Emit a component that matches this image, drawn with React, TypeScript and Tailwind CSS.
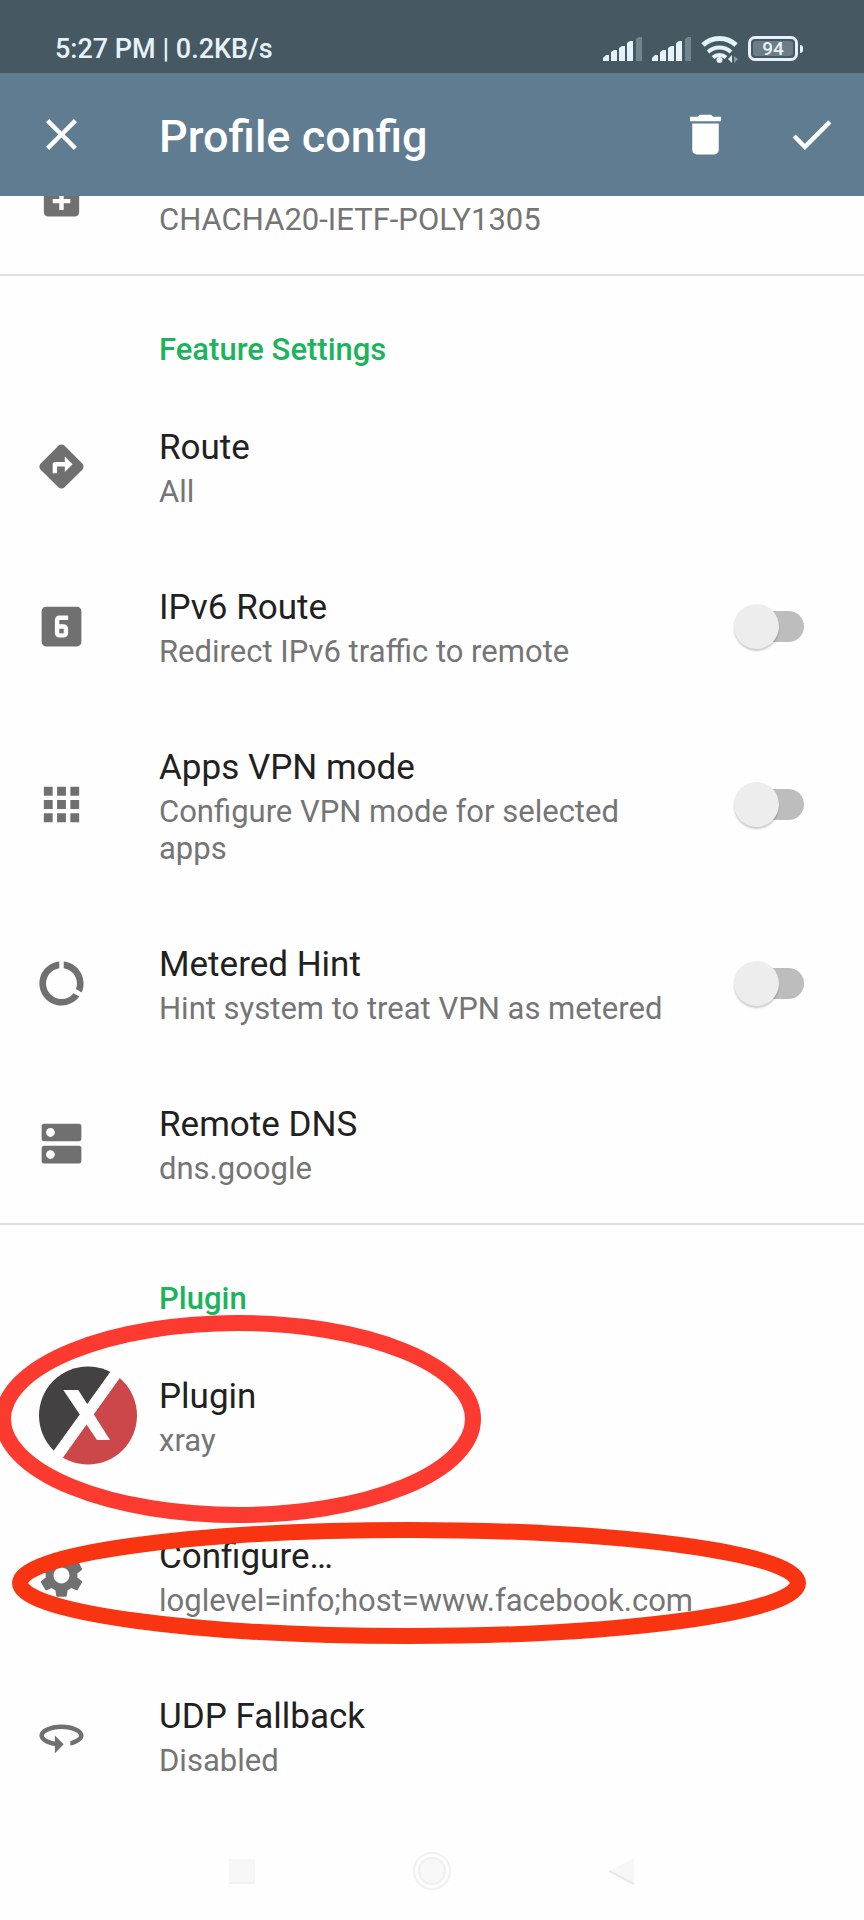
import { useState, type ReactNode } from "react";
import {
  MdApps,
  MdCheck,
  MdClose,
  MdDataUsage,
  MdDelete,
  MdDirections,
  MdDns,
  MdEnhancedEncryption,
  MdLooks6,
  MdSettings,
} from "react-icons/md";

function SignalIcon() {
  return (
    <svg viewBox="0 0 40 26" className="w-[40px] h-[26px]" fill="#e6f2fa" aria-hidden="true">
      <path d="M0 25v-3l3-3h3v6z" />
      <path d="M8 25V16l3-2h3v11z" />
      <path d="M16 25V12l3-2h3v15z" />
      <path d="M24 25V7l3-2h3v20z" />
      <path d="M33 25V3l3-2h3v24z" fill="#73848f" />
    </svg>
  );
}

function WifiIcon() {
  return (
    <svg viewBox="0 0 38 30" className="w-[38px] h-[30px]" fill="none" stroke="#e6f2fa" strokeWidth="5" aria-hidden="true">
      <path d="M2 11a24 24 0 0 1 33 0" />
      <path d="M7 18a17 17 0 0 1 23 0" strokeWidth="4" />
      <path d="M12 23.500a9.500 9.500 0 0 1 13 0" strokeWidth="4" />
      <circle cx="18.500" cy="26" r="3" fill="#e6f2fa" stroke="none" />
      <path d="M31 21v8l-4-4z" fill="#e6f2fa" stroke="none" />
      <path d="M33 22v7l4-4z" fill="#8b9ba5" stroke="none" />
    </svg>
  );
}

function Battery({ level }: { level: number }) {
  return (
    <div className="flex items-center gap-[2px]">
      <div className="w-[50px] h-[25px] rounded-[7px] border-[3px] border-[#e6f2fa] p-[2px]">
        <div className="h-full rounded-[3px] bg-[#6d7d87] flex items-center justify-center text-[19px] leading-[15px] font-medium text-[#e6f2fa]">
          {level}
        </div>
      </div>
      <div className="w-[3px] h-[8px] rounded-r-[3px] bg-[#e6f2fa]" />
    </div>
  );
}

function XrayLogo() {
  return (
    <svg viewBox="0 0 106 106" className="w-[106px] h-[106px] shrink-0" aria-hidden="true">
      <clipPath id="xray-disc">
        <circle cx="53" cy="53.500" r="49" />
      </clipPath>
      <g clipPath="url(#xray-disc)">
        <path d="M0 0H82.500L12 98H0z" fill="#444142" />
        <path d="M106 0V106H20L91 7z" fill="#cc474a" />
        <path d="M82.700 0H96L20.500 106H7z" fill="#fefefe" />
        <path d="M28.300 28h15L75 78H62z" fill="#fefefe" />
      </g>
    </svg>
  );
}

function ThreeSixtyIcon() {
  return (
    <svg viewBox="0 0 24 24" className="w-[53px] h-[53px]" fill="currentColor" aria-hidden="true">
      <path d="M12 7C6.480 7 2 9.240 2 12c0 2.240 2.940 4.130 7 4.770V20l4-4-4-4v2.730c-3.150-.56-5-1.900-5-2.730 0-1.060 3.040-3 8-3s8 1.940 8 3c0 .73-1.460 1.890-4 2.530v2.050c3.530-.77 6-2.530 6-4.580 0-2.760-4.480-5-10-5z" />
    </svg>
  );
}

type RowProps = { icon: ReactNode; title?: string; summary: string };

function RowBody({ icon, title, summary }: RowProps) {
  return (
    <>
      <span className="w-[124px] shrink-0 flex items-center text-[53px] text-[#707070]">{icon}</span>
      <span className="flex-1 min-w-0 pt-[41px] pb-[36px]">
        <span className="block h-[41px] text-[35px] leading-[41px] text-[#212121]">{title}</span>
        <span className="block mt-[5px] text-[31px] leading-[37px] text-[#757575]">{summary}</span>
      </span>
    </>
  );
}

function Row(props: RowProps) {
  return (
    <button type="button" className="flex w-full pl-[35px] text-left">
      <RowBody {...props} />
    </button>
  );
}

function SwitchRow(props: RowProps) {
  const [on, setOn] = useState(false);

  return (
    <label className="flex w-full pl-[35px]">
      <RowBody {...props} />
      <span className="w-[184px] shrink-0 pr-[60px] flex items-center justify-end">
        <input
          type="checkbox"
          role="switch"
          checked={on}
          onChange={(e) => setOn(e.target.checked)}
          className="appearance-none relative w-[62px] h-[31px] rounded-full bg-[#bdbdbd] checked:bg-[#8bdcab] before:absolute before:-left-[8px] before:-top-[7px] before:w-[45px] before:h-[45px] before:rounded-full before:bg-[#ededed] before:shadow-[0_2px_2px_rgba(0,0,0,0.2)] checked:before:left-[26px]"
        />
      </span>
    </label>
  );
}

function Category({ children }: { children: ReactNode }) {
  return (
    <h2 className="pl-[159px] pt-[51px] pb-[13px] text-[31px] leading-[46px] font-medium text-[#1bb45c]">
      {children}
    </h2>
  );
}

export default function App() {
  return (
    <div className="min-h-dvh flex flex-col overflow-x-hidden bg-[#fefefe] font-[Roboto,sans-serif]">
      <header className="relative z-10 text-white">
        <div className="h-[73px] bg-[#465963] pl-[55px] pr-[61px] pt-[24px] flex items-center justify-between">
          <span className="text-[27px] leading-[32px] font-medium text-[#e6f2fa]">5:27 PM | 0.2KB/s</span>
          <div className="flex items-center gap-[9px]">
            <SignalIcon />
            <SignalIcon />
            <WifiIcon />
            <Battery level={94} />
          </div>
        </div>
        <div className="h-[123px] bg-[#5f7c91] pl-[35px] flex items-center">
          <button type="button" aria-label="Close" className="w-[124px] text-[53px]">
            <MdClose />
          </button>
          <h1 className="flex-1 pt-1 text-[45px] leading-[52px] font-medium">Profile config</h1>
          <button type="button" aria-label="Delete" className="w-[106px] flex justify-center text-[53px]">
            <MdDelete />
          </button>
          <button type="button" aria-label="Save" className="w-[106px] flex justify-center text-[53px]">
            <MdCheck />
          </button>
        </div>
      </header>

      {/* the first row is scrolled half under the app bar */}
      <main className="flex-1 -mt-[82px]">
        <section>
          <Row icon={<MdEnhancedEncryption />} summary="CHACHA20-IETF-POLY1305" />
        </section>

        <section className="border-t-2 border-[#dedede]">
          <Category>Feature Settings</Category>
          <Row icon={<MdDirections />} title="Route" summary="All" />
          <SwitchRow icon={<MdLooks6 />} title="IPv6 Route" summary="Redirect IPv6 traffic to remote" />
          <SwitchRow icon={<MdApps />} title="Apps VPN mode" summary="Configure VPN mode for selected apps" />
          <SwitchRow icon={<MdDataUsage />} title="Metered Hint" summary="Hint system to treat VPN as metered" />
          <Row icon={<MdDns />} title="Remote DNS" summary="dns.google" />
        </section>

        <section className="border-t-2 border-[#dedede]">
          <Category>Plugin</Category>
          <div className="relative">
            <Row icon={<XrayLogo />} title="Plugin" summary="xray" />
            <svg
              viewBox="0 0 488 210"
              className="absolute -left-[6px] -top-[21px] w-[488px] h-[210px] pointer-events-none"
              aria-hidden="true"
            >
              <ellipse cx="244" cy="105" rx="235" ry="96" fill="none" stroke="#fd3a30" strokeWidth="16" />
            </svg>
          </div>
          <div className="relative">
            <Row icon={<MdSettings />} title="Configure…" summary="loglevel=info;host=www.facebook.com" />
            <svg
              viewBox="0 0 796 124"
              className="absolute left-[11px] top-[26px] w-[796px] h-[124px] pointer-events-none"
              aria-hidden="true"
            >
              <ellipse cx="398" cy="62" rx="389" ry="53" fill="none" stroke="#f93410" strokeWidth="16" />
            </svg>
          </div>
          <Row icon={<ThreeSixtyIcon />} title="UDP Fallback" summary="Disabled" />
        </section>
      </main>

      <nav className="h-[98px] flex items-center justify-center gap-[150px]">
        <button type="button" aria-label="Recents" className="w-[40px] flex justify-center">
          <span className="w-[26px] h-[25px] bg-[#f7f7f7] border-b-2 border-[#f1f1f1]" />
        </button>
        <button type="button" aria-label="Home" className="w-[40px] flex justify-center">
          <span className="w-[38px] h-[38px] rounded-full border-2 border-[#f0f0f0] p-[3px]">
            <span className="block h-full rounded-full border-2 border-[#f0f0f0] bg-[#f8f8f8]" />
          </span>
        </button>
        <button type="button" aria-label="Back" className="w-[40px] flex justify-center">
          <svg viewBox="0 0 28 28" className="w-[28px] h-[28px]" aria-hidden="true">
            <path d="M1 14 26 1v26z" fill="#f7f7f7" />
            <path d="M1 14l25 13" stroke="#e8e8e8" strokeWidth="2" />
          </svg>
        </button>
      </nav>
    </div>
  );
}
